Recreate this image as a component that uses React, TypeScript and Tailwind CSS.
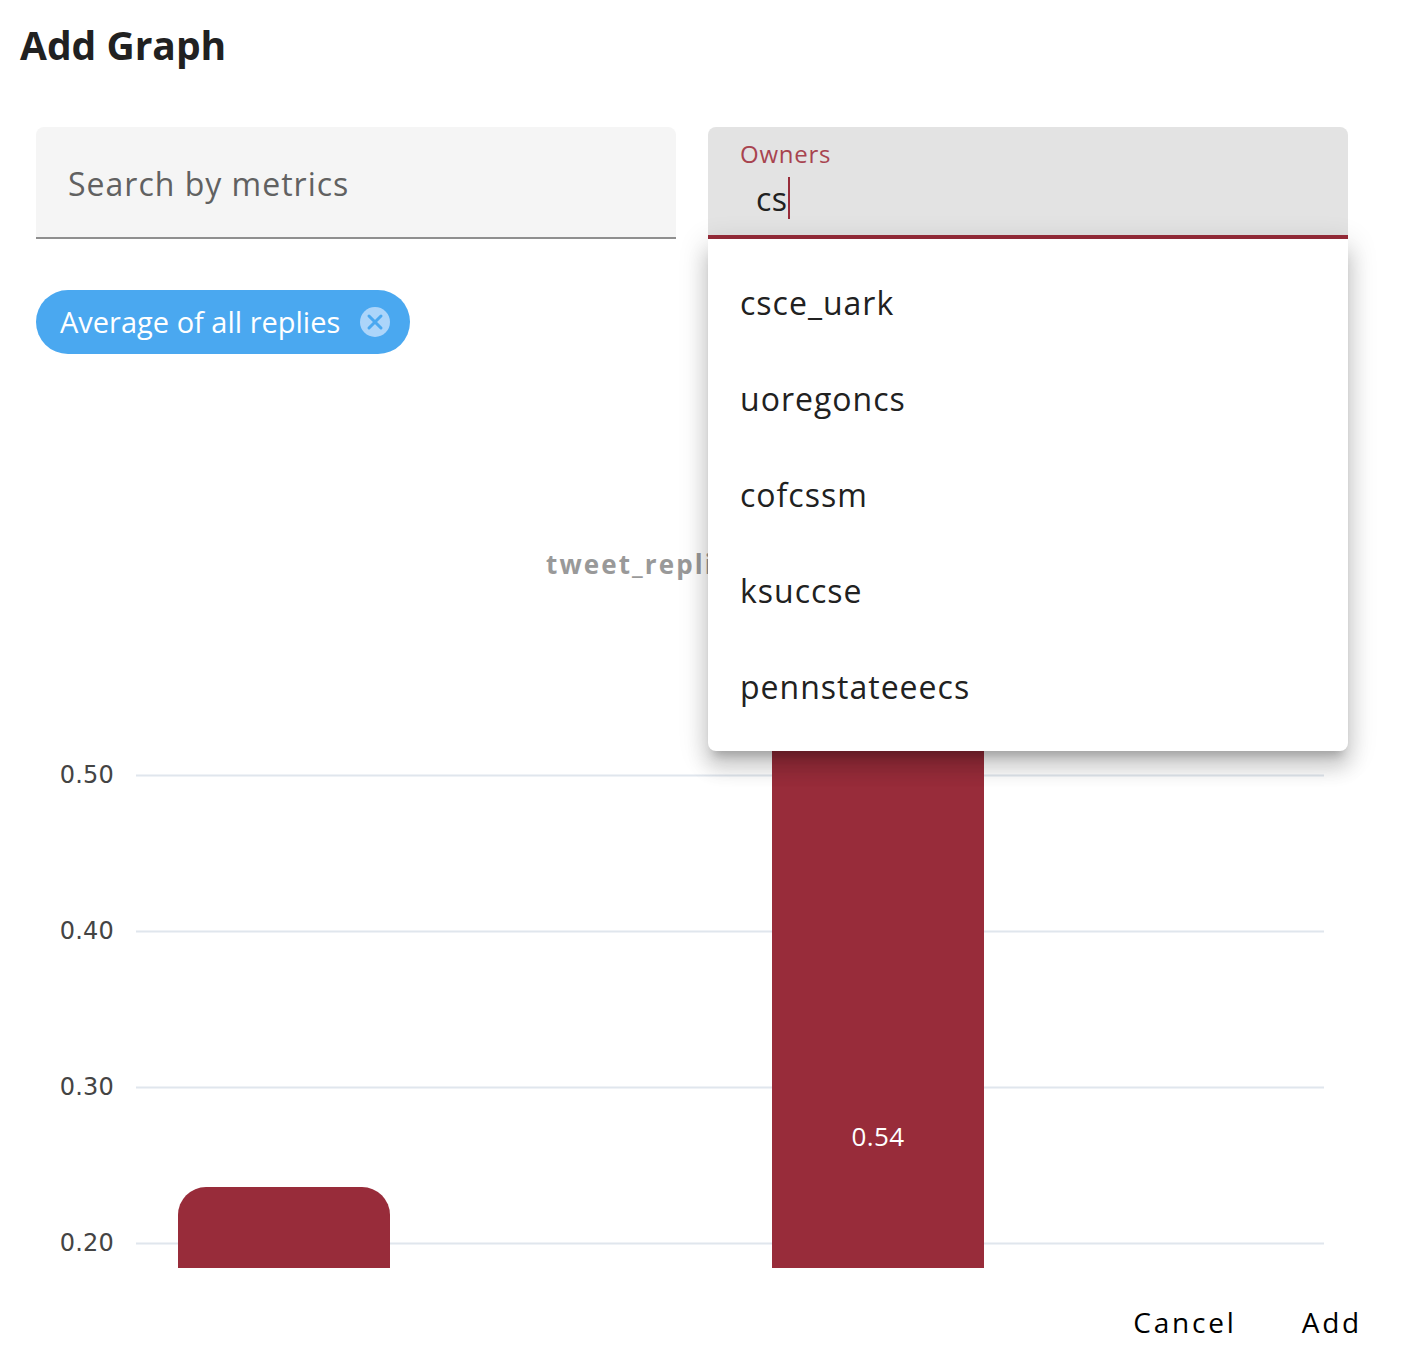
import { X } from "lucide-react";

const owners = ["csce_uark", "uoregoncs", "cofcssm", "ksuccse", "pennstateeecs"];
const ticks = [
  { label: "0.50", y: 775.5 },
  { label: "0.40", y: 931.5 },
  { label: "0.30", y: 1087.5 },
  { label: "0.20", y: 1243.5 },
];

function Chart() {
  return (
    <svg className="block w-[1406px] h-[738px]" viewBox="0 530 1406 738">
      <text x="546" y="574" className="font-['Open_Sans'] font-bold text-[26px] tracking-[2.1px] fill-[#999999]">
        tweet_replies
      </text>
      {ticks.map((t) => (
        <g key={t.label}>
          <line x1="136" x2="1324" y1={t.y} y2={t.y} stroke="#e0e6ed" strokeWidth="2" />
          <text x="114" y={t.y + 7} textAnchor="end" className="font-['DejaVu_Sans'] text-[24px] tracking-[0.2px] fill-[#444444]">
            {t.label}
          </text>
        </g>
      ))}
      <path d="M178 1268V1215a28 28 0 0 1 28-28h156a28 28 0 0 1 28 28v53z" fill="#982c3a" />
      <rect x="772" y="700" width="212" height="568" fill="#982c3a" />
      <text x="878" y="1146" textAnchor="middle" className="font-['Open_Sans'] font-medium text-[26px] tracking-[0.4px] fill-white">
        0.54
      </text>
    </svg>
  );
}

export default function App() {
  return (
    <div className="relative w-[1406px] h-[1370px] overflow-hidden bg-white font-['Open_Sans',sans-serif]">
      <h1 className="pl-5 pt-[19px] h-[127px] text-[39px] leading-[52px] font-bold text-[#212121]">Add Graph</h1>

      <div className="ml-9 flex gap-8">
        <div className="w-[640px] h-[112px] flex items-center pt-[3px] px-8 rounded-t-lg bg-[#f5f5f5] border-b-2 border-[#8f8f8f]">
          <span className="text-[32px] tracking-[1px] text-[#616161]">Search by metrics</span>
        </div>

        <div className="relative w-[640px]">
          <div className="h-[112px] pl-8 pt-[11px] rounded-t-lg bg-[#e3e3e3] border-b-4 border-[#982c3a]">
            <div className="text-[24px] leading-[32px] tracking-[0.75px] text-[#a8434f]">Owners</div>
            <div className="flex items-center pl-4 h-[46px] mt-[5px] text-[32px] tracking-[0.5px] text-[#212121]">
              <span className="pt-[2px]">cs</span>
              <span className="w-[2px] h-[42px] bg-[#982c3a]" />
            </div>
          </div>
          <ul className="absolute z-10 top-full w-full py-4 bg-white rounded-b-lg shadow-[0_10px_10px_-6px_rgba(0,0,0,0.2),0_16px_20px_2px_rgba(0,0,0,0.14),0_6px_28px_4px_rgba(0,0,0,0.12)]">
            {owners.map((o) => (
              <li key={o} className="h-24 flex items-center px-8 text-[32px] tracking-[1px] text-[#212121]">
                {o}
              </li>
            ))}
          </ul>
        </div>
      </div>

      <div className="ml-9 mt-[51px] w-[374px] h-16 flex items-center pl-6 rounded-full bg-[#4aa8f0] text-white">
        <span className="text-[29px]">Average of all replies</span>
        <span className="ml-5 w-[30px] h-[30px] flex items-center justify-center rounded-full bg-[#acd5fa]">
          <X size={24} strokeWidth={3} className="text-[#4aa8f0]" />
        </span>
      </div>

      <div className="mt-[176px]">
        <Chart />
      </div>

      <div className="flex justify-end items-center pt-[6px] h-[102px] pr-[44px] gap-[65px] text-[28px] font-medium tracking-[2.8px] text-black">
        <button>Cancel</button>
        <button>Add</button>
      </div>
    </div>
  );
}
